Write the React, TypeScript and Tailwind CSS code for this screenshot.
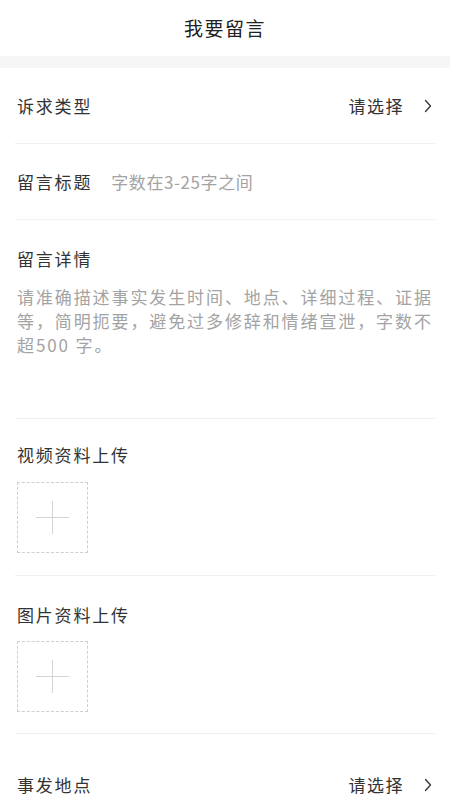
import React from "react";

const font = { fontFamily: '"Noto Sans CJK SC", "Noto Sans", sans-serif' };

function Chevron() {
  return (
    <svg width="8" height="14" viewBox="0 0 8 14" fill="none" className="ml-[20px]">
      <path d="M1.5 1.5 L6.5 7 L1.5 12.5" stroke="#333" strokeWidth="1.3" strokeLinecap="round" strokeLinejoin="round" />
    </svg>
  );
}

function UploadBox() {
  return (
    <div className="w-[71px] h-[71px] border border-dashed border-[#cfcfcf] flex items-center justify-center">
      <div className="relative w-[33px] h-[33px]">
        <div className="absolute left-0 right-0 top-[16px] h-px bg-[#d4d4d4]" />
        <div className="absolute top-0 bottom-0 left-[16px] w-px bg-[#d4d4d4]" />
      </div>
    </div>
  );
}

export default function App() {
  return (
    <div className="w-[450px] h-[800px] bg-white overflow-hidden text-[#333]" style={font}>
      <div className="h-[56px] flex items-center justify-center text-[19px] tracking-[1.5px] text-[#222]">
        我要留言
      </div>
      <div className="h-[12px] bg-[#f6f6f6]" />
      <div className="px-[15px]">
        <div className="h-[76px] flex items-center justify-between border-b border-[#f0f0f0] pl-[2px] pr-[3px]">
          <span className="text-[17px] tracking-[1.8px] leading-[24px]">诉求类型</span>
          <span className="flex items-center text-[17px] tracking-[1.5px] leading-[24px]">
            请选择
            <Chevron />
          </span>
        </div>
        <div className="h-[76px] flex items-center border-b border-[#f0f0f0] pl-[2px]">
          <span className="text-[17px] tracking-[1.8px] leading-[24px]">留言标题</span>
          <span className="ml-[19px] text-[17px] leading-[24px] text-[#a3a3a3] tracking-[0.6px]">字数在3-25字之间</span>
        </div>
        <div className="pt-[27px] border-b border-[#f0f0f0] pl-[2px]">
          <div className="text-[17px] tracking-[1.8px] leading-[24px]">留言详情</div>
          <div className="mt-[14px] h-[133px] text-[17px] leading-[24px] tracking-[1.9px] text-[#a3a3a3] whitespace-nowrap">
            <div>请准确描述事实发生时间、地点、详细过程、证据</div>
            <div>等，简明扼要，避免过多修辞和情绪宣泄，字数不</div>
            <div>超500 字。</div>
          </div>
        </div>
        <div className="pt-[24px] pb-[22px] border-b border-[#f0f0f0] pl-[2px]">
          <div className="text-[17px] tracking-[1.8px] leading-[24px]">视频资料上传</div>
          <div className="mt-[15px]">
            <UploadBox />
          </div>
        </div>
        <div className="pt-[27px] pb-[21px] border-b border-[#f0f0f0] pl-[2px]">
          <div className="text-[17px] tracking-[1.8px] leading-[24px]">图片资料上传</div>
          <div className="mt-[14px]">
            <UploadBox />
          </div>
        </div>
        <div className="pt-[39px] flex items-center justify-between pl-[2px] pr-[3px]">
          <span className="text-[17px] tracking-[1.8px] leading-[24px]">事发地点</span>
          <span className="flex items-center text-[17px] tracking-[1.5px] leading-[24px]">
            请选择
            <Chevron />
          </span>
        </div>
      </div>
    </div>
  );
}
